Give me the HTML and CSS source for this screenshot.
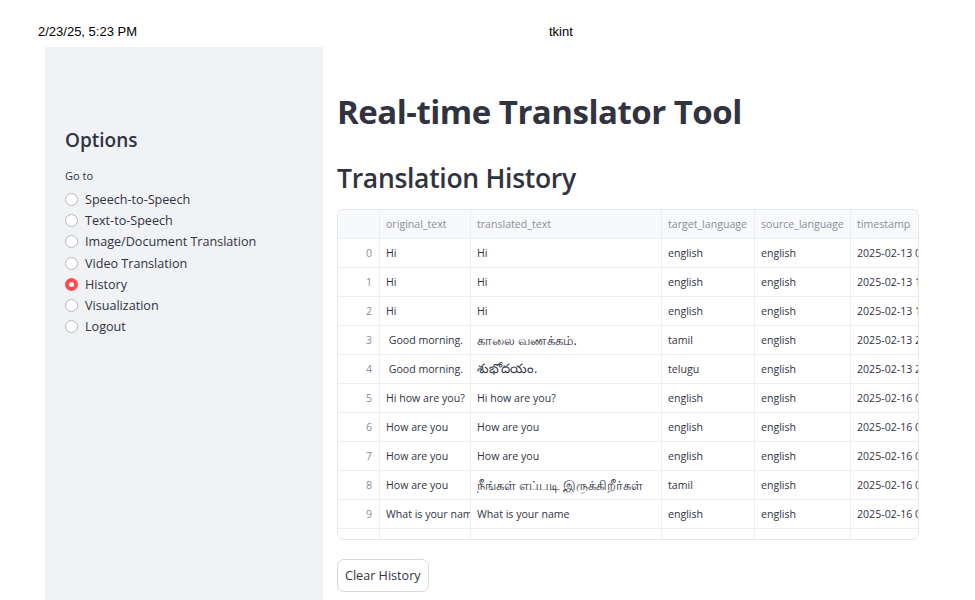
FILE: index.html
```html
<!DOCTYPE html>
<html>
<head>
<meta charset="utf-8">
<link rel="stylesheet" href="styles.css">
</head>
<body>
<div class="printhead">
  <span class="date">2/23/25, 5:23 PM</span>
  <span class="title">tkint</span>
</div>
<div class="app">
  <aside class="sidebar">
    <h2 class="side-title">Options</h2>
    <div class="goto">Go to</div>
    <ul class="radios">
      <li><span class="dot"></span>Speech-to-Speech</li>
      <li><span class="dot"></span>Text-to-Speech</li>
      <li><span class="dot"></span>Image/Document Translation</li>
      <li><span class="dot"></span>Video Translation</li>
      <li class="on"><span class="dot"></span>History</li>
      <li><span class="dot"></span>Visualization</li>
      <li><span class="dot"></span>Logout</li>
    </ul>
  </aside>
  <main class="main">
    <h1 class="h1">Real-time Translator Tool</h1>
    <h2 class="h2">Translation History</h2>
    <div class="grid">
      <div class="row head">
        <div class="c idx"></div><div class="c o">original_text</div><div class="c t">translated_text</div><div class="c tl">target_language</div><div class="c sl">source_language</div><div class="c ts">timestamp</div>
      </div>
      <div class="row"><div class="c idx">0</div><div class="c o">Hi</div><div class="c t">Hi</div><div class="c tl">english</div><div class="c sl">english</div><div class="c ts">2025-02-13 0</div></div>
      <div class="row"><div class="c idx">1</div><div class="c o">Hi</div><div class="c t">Hi</div><div class="c tl">english</div><div class="c sl">english</div><div class="c ts">2025-02-13 1</div></div>
      <div class="row"><div class="c idx">2</div><div class="c o">Hi</div><div class="c t">Hi</div><div class="c tl">english</div><div class="c sl">english</div><div class="c ts">2025-02-13 1</div></div>
      <div class="row"><div class="c idx">3</div><div class="c o">&nbsp;Good morning.</div><div class="c t tam">காலை வணக்கம்.</div><div class="c tl">tamil</div><div class="c sl">english</div><div class="c ts">2025-02-13 2</div></div>
      <div class="row"><div class="c idx">4</div><div class="c o">&nbsp;Good morning.</div><div class="c t tel">శుభోదయం.</div><div class="c tl">telugu</div><div class="c sl">english</div><div class="c ts">2025-02-13 2</div></div>
      <div class="row"><div class="c idx">5</div><div class="c o">Hi how are you?</div><div class="c t">Hi how are you?</div><div class="c tl">english</div><div class="c sl">english</div><div class="c ts">2025-02-16 0</div></div>
      <div class="row"><div class="c idx">6</div><div class="c o">How are you</div><div class="c t">How are you</div><div class="c tl">english</div><div class="c sl">english</div><div class="c ts">2025-02-16 0</div></div>
      <div class="row"><div class="c idx">7</div><div class="c o">How are you</div><div class="c t">How are you</div><div class="c tl">english</div><div class="c sl">english</div><div class="c ts">2025-02-16 0</div></div>
      <div class="row"><div class="c idx">8</div><div class="c o">How are you</div><div class="c t tam">நீங்கள் எப்படி இருக்கிறீர்கள்</div><div class="c tl">tamil</div><div class="c sl">english</div><div class="c ts">2025-02-16 0</div></div>
      <div class="row"><div class="c idx">9</div><div class="c o">What is your name</div><div class="c t">What is your name</div><div class="c tl">english</div><div class="c sl">english</div><div class="c ts">2025-02-16 0</div></div>
      <div class="row"><div class="c idx">10</div><div class="c o">What is your name</div><div class="c t">What is your name</div><div class="c tl">english</div><div class="c sl">english</div><div class="c ts">2025-02-16 0</div></div>
    </div>
    <button class="btn">Clear History</button>
  </main>
</div>
</body>
</html>
```

FILE: styles.css
```css
* { box-sizing: border-box; }
html, body { margin: 0; padding: 0; background: #fff; }
body { width: 975px; height: 600px; overflow: hidden; font-family: "Open Sans", "Noto Sans", sans-serif; color: #31333f; }

.printhead { height: 47px; position: relative; font-family: "Liberation Sans", Arial, sans-serif; font-size: 13px; color: #000; }
.printhead .date { position: absolute; left: 38px; top: 24px; }
.printhead .title { position: absolute; left: 549px; top: 24px; }

.app { display: flex; height: 553px; }
.sidebar { width: 278px; margin-left: 45px; background: #f0f2f6; padding: 80px 20px 0 20px; flex: none; }
.side-title { margin: 0; font-size: 19px; font-weight: 600; line-height: 26px; color: #31333f; }
.goto { margin-top: 16px; font-size: 11px; line-height: 14px; color: #31333f; }
.radios { list-style: none; margin: 6px 0 0 0; padding: 0; }
.radios li { display: flex; align-items: center; height: 21.2px; font-size: 12.6px; color: #31333f; }
.dot { width: 13px; height: 13px; border-radius: 50%; border: 1px solid #b5b8c0; background: #fff; margin-right: 7px; flex: none; }
.radios li.on .dot { background: #fff; border: 4px solid #ff4b4b; }

.main { padding: 42px 0 0 14px; flex: 1; }
.h1 { margin: 0; font-size: 33px; font-weight: 700; line-height: 46px; letter-spacing: -0.5px; color: #31333f; }
.h2 { margin: 25px 0 0 0; font-size: 26.5px; font-weight: 600; line-height: 36px; letter-spacing: -0.3px; color: #31333f; }

.grid { margin-top: 13px; width: 582px; height: 331px; border: 1px solid #e6e8ec; border-radius: 6px; overflow: hidden; font-size: 10.6px; }
.row { display: flex; height: 29px; border-bottom: 1px solid #eceef1; }
.row.head { background: #f8f9fb; color: #8a8d99; }
.c { flex: none; padding: 0 6px; display: flex; align-items: center; white-space: nowrap; overflow: hidden; border-right: 1px solid #eceef1; }
.idx { width: 42px; justify-content: flex-end; color: #8a8d99; padding-right: 7px; }
.o { width: 91px; }
.t { width: 191px; }
.tl { width: 93px; }
.sl { width: 96px; }
.ts { width: 69px; border-right: none; padding-right: 0; }
.tam { font-size: 13px; }
.tel { font-size: 13px; }

.btn { margin-top: 19px; height: 33px; padding: 0 7px; font-family: inherit; font-size: 12.6px; color: #31333f; background: #fff; border: 1px solid #d6d8de; border-radius: 7px; }
```
